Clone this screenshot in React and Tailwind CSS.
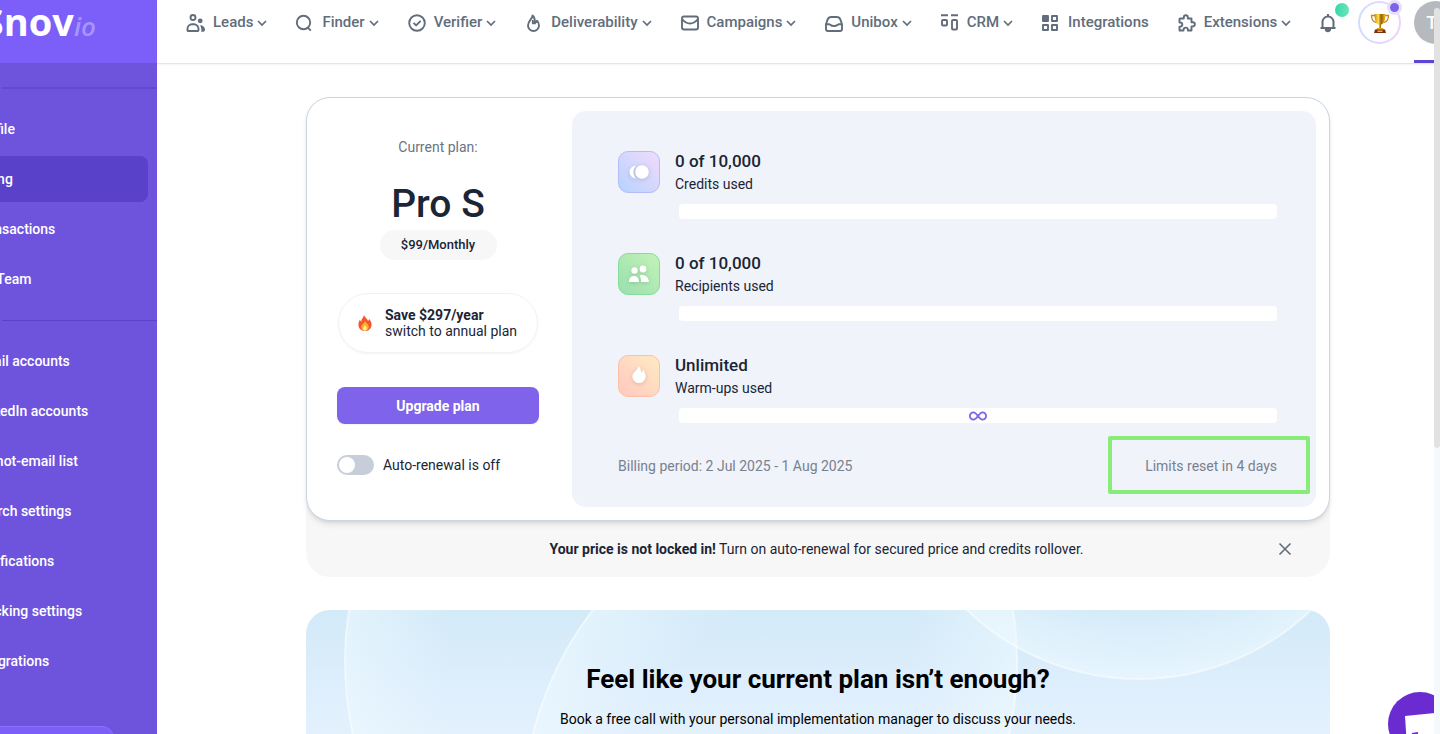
import React from "react";

const NavIcon = ({ name }) => {
  const shapes = {
    leads: (
      <>
        <circle cx="7" cy="4.500" r="2.500" />
        <path d="M1.500 17.200v-1.400a4.500 4.500 0 0 1 4.500-4.500h2a4.500 4.500 0 0 1 4.500 4.500v1.400a.8.8 0 0 1-.8.8H2.300a.8.8 0 0 1-.8-.8z" />
        <circle cx="14.200" cy="7.800" r="2.400" fill="currentColor" stroke="none" />
        <path
          d="M14 12.200c3 0 5 2 5 4.400 0 1.400-.6 2.200-1.600 2.200h-2.200c.5-2.400 0-4.600-1.200-6.600z"
          fill="currentColor"
          stroke="none"
        />
      </>
    ),
    finder: (
      <>
        <circle cx="8.500" cy="9.500" r="6.700" />
        <path d="M12.800 14.600l3 3" />
      </>
    ),
    verifier: (
      <>
        <circle cx="10" cy="10" r="7.800" />
        <path d="M6.500 9.800l2.600 2.600 4.600-4.600" />
      </>
    ),
    fire: (
      <>
        <path d="M8.600 2.500c.2 3-4.600 5.200-4.600 10a5.500 5.500 0 0 0 11 0c0-2-.6-3.600-2-4.800-.5 1.500-1.300 2-2.600 2.200.8-2.800.2-5.400-1.800-7.400z" />
        <path d="M8.800 7v3.400h3" />
      </>
    ),
    mail: (
      <>
        <rect x="2" y="3.500" width="16" height="13" rx="2" />
        <path d="M2.500 6.500c2.500 3 5 4 7.500 4s5-1 7.500-4" />
      </>
    ),
    inbox: (
      <>
        <path d="M2 11.200l1.600-4.600A4 4 0 0 1 7.300 4h5.400a4 4 0 0 1 3.700 2.600L18 11.200V16a2 2 0 0 1-2 2H4a2 2 0 0 1-2-2z" />
        <path d="M2 11.200h3.200c1 0 1.400 1.800 4.800 1.800s3.800-1.800 4.800-1.800H18" />
      </>
    ),
    crm: (
      <>
        <path d="M1 2.200h7M11 2.200h7" />
        <rect x="2" y="7" width="5" height="5.500" rx="1" />
        <rect x="12" y="7" width="5" height="9.500" rx="1" />
      </>
    ),
    grid: (
      <>
        <rect x="2" y="3" width="5" height="5" fill="currentColor" />
        <rect x="11" y="3" width="5" height="5" />
        <rect x="2" y="12" width="5" height="5" />
        <rect x="11" y="12" width="5" height="5" />
      </>
    ),
    puzzle: (
      <path d="M3 5.500h3.800V4.200a2 2 0 0 1 4 0v1.300h3.700v3.700h1.300a2.100 2.100 0 0 1 0 4.200h-1.300v4.100h-3.600v-.7a2.200 2.200 0 0 0-4.400 0v.7H2.500v-3.800h.7a2.100 2.100 0 0 0 0-4.200H2.500V6z" />
    ),
  };
  return (
    <svg
      className="h-5 w-5 shrink-0"
      viewBox="0 0 20 20"
      fill="none"
      stroke="currentColor"
      strokeWidth="1.900"
      strokeLinejoin="round"
    >
      {shapes[name]}
    </svg>
  );
};

const Chevron = () => (
  <svg
    className="h-[10px] w-[10px] shrink-0"
    viewBox="0 0 10 10"
    fill="none"
    stroke="currentColor"
    strokeWidth="1.700"
  >
    <path d="M1 3l4 4 4-4" />
  </svg>
);

const navItems = [
  { label: "Leads", icon: "leads", menu: true },
  { label: "Finder", icon: "finder", menu: true },
  { label: "Verifier", icon: "verifier", menu: true },
  { label: "Deliverability", icon: "fire", menu: true },
  { label: "Campaigns", icon: "mail", menu: true },
  { label: "Unibox", icon: "inbox", menu: true },
  { label: "CRM", icon: "crm", menu: true },
  { label: "Integrations", icon: "grid", menu: false },
  { label: "Extensions", icon: "puzzle", menu: true },
];

const accountLinks = ["Profile", "Billing", "Transactions", "My Team"];
const settingLinks = [
  "Email accounts",
  "LinkedIn accounts",
  "Do-not-email list",
  "Search settings",
  "Notifications",
  "Tracking settings",
  "Integrations",
];

const SideLink = ({ label, active }) => (
  <li className="h-[50px] py-[2px]">
    <a
      href="#"
      className={
        "flex h-[46px] items-center rounded-lg pl-[37px] text-sm font-medium text-white " +
        (active ? "bg-[#5a41c9]" : "")
      }
    >
      {label}
    </a>
  </li>
);

const Sidebar = () => (
  <aside className="flex w-[157px] shrink-0 justify-end overflow-hidden bg-[#6e54dd]">
    <div className="flex w-[220px] shrink-0 flex-col">
      <a
        href="#"
        className="flex h-[63px] shrink-0 items-baseline justify-end bg-[#7b5ff8] pr-[61px] font-[Open_Sans,sans-serif] text-[38px] leading-[42px] font-bold text-white"
      >
        Snov
        <span className="text-[26px] font-semibold text-[#a894ff] italic">
          io
        </span>
      </a>
      <hr className="mt-6 ml-[65px] border-t-2 border-[#6248d2]" />
      <ul className="mt-[15px] pr-[9px]">
        {accountLinks.map((label) => (
          <SideLink key={label} label={label} active={label === "Billing"} />
        ))}
      </ul>
      <hr className="mt-4 ml-[65px] border-[#5a41c9]" />
      <ul className="mt-[15px] pr-[9px]">
        {settingLinks.map((label) => (
          <SideLink key={label} label={label} />
        ))}
      </ul>
      <div className="mt-10 mr-[43px] h-12 shrink-0 rounded-xl border border-[#8a70fa] bg-[#7b5ff8]" />
    </div>
  </aside>
);

const Trophy = () => (
  <svg className="h-5 w-5" viewBox="0 0 20 20">
    <defs>
      <linearGradient id="gold" x1="0" x2="1">
        <stop offset="0" stopColor="#c98a04" />
        <stop offset=".35" stopColor="#ffe04a" />
        <stop offset=".6" stopColor="#9c5c06" />
        <stop offset="1" stopColor="#f3bd1c" />
      </linearGradient>
    </defs>
    <path
      d="M5 2.500H1.500c0 4.500 2 6.500 5 7M15 2.500h3.500c0 4.500-2 6.500-5 7"
      fill="none"
      stroke="#c48a12"
      strokeWidth="1.300"
    />
    <path
      d="M4.500 1h11c0 6-1.500 9.500-4.500 10.800V16H9v-4.200C6 10.500 4.500 7 4.500 1z"
      fill="url(#gold)"
    />
    <path d="M7 15h6l1 2H6z" fill="#e0a516" />
    <path d="M5 16.500h10l1 3.500H4z" fill="#7a2e10" />
    <path d="M7.500 17.500h5v1.500h-5z" fill="#e5b43c" />
  </svg>
);

const Header = () => (
  <header className="relative z-10 flex h-16 shrink-0 items-start overflow-hidden border-b border-[#e5e5e7] bg-white pl-[29px] text-[#626d7c] shadow-xs">
    <nav className="flex h-[45px] shrink-0 items-center gap-7">
      {navItems.map(({ label, icon, menu }) => (
        <a
          key={label}
          href="#"
          className="flex shrink-0 items-center text-[15px] font-medium"
        >
          <NavIcon name={icon} />
          <span className="ml-[7px]">{label}</span>
          {menu && (
            <span className="ml-1">
              <Chevron />
            </span>
          )}
        </a>
      ))}
    </nav>
    <button
      className="relative ml-[26px] flex h-[45px] w-[22px] shrink-0 items-center justify-center"
      aria-label="Notifications"
    >
      <svg
        className="h-5 w-5"
        viewBox="0 0 20 20"
        fill="none"
        stroke="currentColor"
        strokeWidth="2"
      >
        <path d="M4.500 15V9a5.500 5.500 0 0 1 11 0v6M2.500 15h15M10 1v2.500" />
        <path d="M7.800 16a2.200 2.200 0 0 0 4.400 0" fill="currentColor" />
      </svg>
      <span className="absolute top-[3px] left-[18px] h-[14px] w-[14px] rounded-full bg-linear-to-r from-[#2fd9a8] to-[#6ce3bd]" />
    </button>
    <button
      className="relative mt-[1px] ml-[19px] h-[43px] w-[43px] shrink-0 rounded-full bg-linear-to-r from-[#cfdcff] to-[#efd2fd] p-[2px]"
      aria-label="Rewards"
    >
      <span className="flex h-full w-full items-center justify-center rounded-full bg-white">
        <Trophy />
      </span>
      <span className="absolute -top-px right-[-1px] h-[15px] w-[15px] rounded-full border-[3px] border-[#e6dffc] bg-[#7d62ea]" />
    </button>
    <div className="ml-[13px] h-[63px] shrink-0 border-b-[3px] border-[#5f45d0]">
      <button className="mt-[1px] flex h-[43px] w-[43px] items-center rounded-full bg-[#b6babf] pl-3 text-lg font-medium text-white">
        T
      </button>
    </div>
  </header>
);

const UsageIcon = ({ type }) => {
  const styles = {
    credits: "border-[#b5bdf8] from-[#b5d2ff] to-[#f1dbfb]",
    recipients: "border-[#86dc9c] from-[#98e0ae] to-[#c4f2b8]",
    warmups: "border-[#ffbfa6] from-[#ffc8c0] to-[#ffeac2]",
  };
  return (
    <div
      className={
        "flex h-[42px] w-[42px] shrink-0 items-center justify-center rounded-[10px] border bg-linear-to-tr " +
        styles[type]
      }
    >
      <svg
        className="h-6 w-6 drop-shadow-sm"
        viewBox="0 0 24 24"
        fill="#fff"
      >
        {type === "credits" && (
          <>
            <path d="M9 5.500a6.500 6.500 0 0 0 0 13c-3.500-4-3.500-9 0-13z" />
            <circle cx="15" cy="12" r="6.800" />
          </>
        )}
        {type === "recipients" && (
          <>
            <circle cx="7.500" cy="8.500" r="3.200" />
            <circle cx="16" cy="7" r="3.400" />
            <path d="M2 20c0-4 2-6 5-6s5 2 5 6zM12.500 13.500c4.500-1.500 9 1 9.500 6.500h-8c0-3-.3-5-1.500-6.500z" />
          </>
        )}
        {type === "warmups" && (
          <path d="M11.500 2c1.500 1.500 2.800 3.500 2.600 6.500 1-.6 1.700-1.600 1.800-2.800C17.500 7.500 18.600 10 18.600 12.500a6.600 6.600 0 0 1-13.200 0C5.400 8 11 6.500 11.500 2z" />
        )}
      </svg>
    </div>
  );
};

const usage = [
  { type: "credits", value: "0 of 10,000", label: "Credits used" },
  { type: "recipients", value: "0 of 10,000", label: "Recipients used" },
  { type: "warmups", value: "Unlimited", label: "Warm-ups used" },
];

const UsageRow = ({ type, value, label }) => (
  <li className="flex gap-[15px]">
    <UsageIcon type={type} />
    <div className="flex-1">
      <p className="text-[17px] leading-5 font-medium">{value}</p>
      <p className="mt-[5px] text-sm leading-[17px]">{label}</p>
      <div className="mt-[11px] ml-1 flex h-[15px] items-center justify-center rounded bg-white">
        {type === "warmups" && (
          <svg
            className="h-[10px] w-[18px]"
            viewBox="0 0 18 10"
            fill="none"
            stroke="#7d62ea"
            strokeWidth="1.800"
          >
            <path d="M9 5C7.500 3 6.300 1.300 4.600 1.300a3.700 3.700 0 0 0 0 7.400C6.300 8.700 7.500 7 9 5s2.700-3.700 4.400-3.700a3.700 3.700 0 0 1 0 7.400C11.700 8.700 10.500 7 9 5z" />
          </svg>
        )}
      </div>
    </div>
  </li>
);

const PlanCard = () => (
  <section className="rounded-3xl bg-[#f7f7f7]">
    <div className="flex rounded-3xl border border-[#cbd4e1] bg-white py-[13px] pr-[13px] pl-[30px] shadow-md">
      <div className="mr-[33px] flex w-[202px] shrink-0 flex-col items-center">
        <p className="mt-7 text-sm leading-[17px] text-[#6b7482]">
          Current plan:
        </p>
        <h1 className="mt-6 text-[39px] leading-[49px] font-medium">Pro S</h1>
        <p className="mt-px flex h-[30px] w-[117px] items-center justify-center rounded-full bg-[#f7f7f7] text-[13px] font-medium">
          $99/Monthly
        </p>
        <div className="mt-[33px] flex h-[60px] w-[200px] items-center rounded-full border border-[#f0f2f6] pl-[17px] shadow-xs">
          <svg className="h-[18px] w-[18px]" viewBox="0 0 18 18">
            <path
              d="M8 1c1 3 3.500 3.500 4 6 .8-.5 1-1.200 1-2.200C15 7 15.800 9 15.500 11.500 15 15 12.500 17 9 17s-6.200-2.200-6.500-5.500C2.300 9 3 7 4 5.500c.2 1 .6 1.800 1.200 2.200C5.300 5 7.500 3.500 8 1z"
              fill="#f8552f"
            />
            <path
              d="M9 6.500c.5 2.500 3.500 3 3.700 6.200.1 2.600-1.600 4-3.700 4s-4-1.300-3.900-3.700C5.200 10.500 8.500 9.500 9 6.500z"
              fill="#ffb02e"
            />
            <path
              d="M9 11c.3 1.200 1.800 1.800 1.700 3.400-.1 1.400-.8 2.100-1.800 2.100s-1.800-.8-1.800-2.100C7.200 13 8.800 12.400 9 11z"
              fill="#fff19a"
            />
          </svg>
          <p className="ml-[11px] text-sm leading-4">
            <b>Save $297/year</b>
            <br />
            switch to annual plan
          </p>
        </div>
        <button className="mt-[34px] h-[37px] w-full rounded-lg bg-[#7f63eb] text-sm font-bold text-white shadow-xs">
          Upgrade plan
        </button>
        <label className="mt-[31px] flex h-5 w-full items-center text-sm">
          <input type="checkbox" role="switch" className="peer sr-only" />
          <span className="mr-[9px] flex h-5 w-[37px] items-center rounded-full bg-[#c7ced9] px-[2px] peer-checked:justify-end peer-checked:bg-[#7f63eb]">
            <span className="h-4 w-4 rounded-full bg-white" />
          </span>
          Auto-renewal is off
        </label>
      </div>
      <div className="relative flex-1 rounded-[14px] bg-[#f0f3f9] pt-10 pr-[39px] pb-8 pl-[46px]">
        <ul className="flex flex-col gap-[34px]">
          {usage.map((item) => (
            <UsageRow key={item.type} {...item} />
          ))}
        </ul>
        <div className="mt-[35px] flex justify-between text-sm leading-[17px] text-[#78818f]">
          <p>Billing period: 2 Jul 2025 - 1 Aug 2025</p>
          <p>Limits reset in 4 days</p>
        </div>
        <div className="absolute right-[6px] bottom-[13px] h-[58px] w-[202px] rounded-xs border-4 border-[#88ed78]" />
      </div>
    </div>
    <div className="flex h-14 items-center pr-[37px] pl-[50px] text-sm">
      <p className="flex-1 text-center">
        <b>Your price is not locked in!</b> Turn on auto-renewal for secured
        price and credits rollover.
      </p>
      <button aria-label="Close">
        <svg
          className="h-4 w-4"
          viewBox="0 0 16 16"
          fill="none"
          stroke="#626d7c"
          strokeWidth="1.600"
        >
          <path d="M2.500 2.500l11 11M13.500 2.500l-11 11" />
        </svg>
      </button>
    </div>
  </section>
);

const Promo = () => (
  <section className="relative mt-[33px] h-[260px] shrink-0 overflow-hidden rounded-3xl bg-linear-to-b from-[#d3eaf8] from-0% via-[#deeefc] via-30% to-[#f0faff] to-100% pt-[52px] text-center text-black">
    <svg
      className="absolute inset-0 h-full w-full"
      viewBox="0 0 1024 260"
      preserveAspectRatio="xMidYMin slice"
      stroke="#fff"
      strokeOpacity=".5"
      strokeWidth="2"
    >
      <defs>
        <radialGradient id="bubble">
          <stop offset=".7" stopColor="#eefaff" stopOpacity="0" />
          <stop offset="1" stopColor="#eefaff" stopOpacity=".55" />
        </radialGradient>
        {/* the middle bubble only shows its left side */}
        <clipPath id="leftHalf">
          <rect width="480" height="260" />
        </clipPath>
      </defs>
      <circle cx="375" cy="52" r="336" fill="url(#bubble)" />
      <circle
        cx="553"
        cy="205"
        r="336"
        fill="url(#bubble)"
        clipPath="url(#leftHalf)"
      />
      <circle cx="833" cy="-180" r="249" fill="url(#bubble)" />
    </svg>
    <h2 className="relative text-[26px] leading-[34px] font-bold">
      Feel like your current plan isn’t enough?
    </h2>
    <p className="relative mt-[15px] text-sm leading-[17px]">
      Book a free call with your personal implementation manager to discuss
      your needs.
    </p>
  </section>
);

const App = () => {
  return (
    <div className="relative flex h-screen overflow-hidden bg-white font-[Roboto,sans-serif] text-[#1a2536]">
      <Sidebar />
      <div className="flex min-w-0 flex-1 flex-col">
        <Header />
        <main className="flex-1 overflow-hidden pt-[33px] pr-[110px] pl-[149px]">
          <PlanCard />
          <Promo />
        </main>
      </div>
      <button
        aria-label="Open chat"
        className="absolute right-[-12px] bottom-[-22px] h-16 w-16 overflow-hidden rounded-full bg-[#6a2bd1]"
      >
        <svg className="h-full w-full" viewBox="0 0 64 64" fill="#fff">
          <path d="M17 24l30-3 1 15 5 1v15l-34 3z" />
          <path d="M24 42l6-1" stroke="#6a2bd1" strokeWidth="2" />
        </svg>
      </button>
      <div className="absolute inset-y-0 right-0 z-20 flex w-[6px] flex-col pt-2">
        <div className="h-[440px] rounded-full bg-[#e2e2e3]" />
        <div className="flex-1 bg-[#f5f8fd]" />
      </div>
    </div>
  );
};

export default App;
